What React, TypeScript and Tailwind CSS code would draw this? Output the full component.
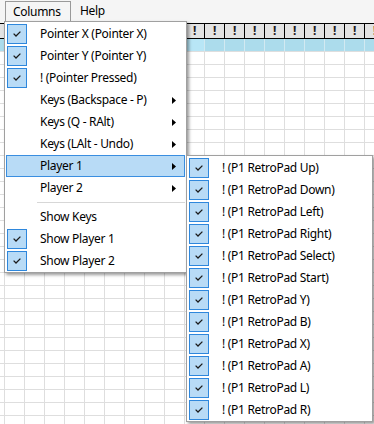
import clsx from 'clsx';

const COLS = 19;
const ROWS = 29;

const mainItems: { label: string; checked?: boolean; arrow?: boolean; active?: boolean; sep?: boolean }[] = [
    { label: 'Pointer X (Pointer X)', checked: true },
    { label: 'Pointer Y (Pointer Y)', checked: true },
    { label: '! (Pointer Pressed)', checked: true },
    { label: 'Keys (Backspace - P)', arrow: true },
    { label: 'Keys (Q - RAlt)', arrow: true },
    { label: 'Keys (LAlt - Undo)', arrow: true },
    { label: 'Player 1', arrow: true, active: true },
    { label: 'Player 2', arrow: true },
    { label: '', sep: true },
    { label: 'Show Keys' },
    { label: 'Show Player 1', checked: true },
    { label: 'Show Player 2', checked: true },
];

const padItems = ['Up', 'Down', 'Left', 'Right', 'Select', 'Start', 'Y', 'B', 'X', 'A', 'L', 'R'];

function Check() {
    return (
        <span className="flex h-[20px] w-[20px] items-center justify-center border border-[#2e87dc] bg-[#b8dbf6]">
            <svg width="8" height="6" viewBox="0 0 8 6">
                <path d="M0.6 2.6 L3 5 L7.4 0.6" stroke="#1b1b1b" strokeWidth="1.3" fill="none" />
            </svg>
        </span>
    );
}

function MenuItem({ label, checked, arrow, active }: { label: string; checked?: boolean; arrow?: boolean; active?: boolean }) {
    return (
        <div
            className={clsx(
                'mx-[1px] flex h-[22px] items-center border',
                active ? 'border-[#3a8ee0] bg-[#b8dbf6]' : 'border-transparent'
            )}
        >
            <div className="h-[20px] w-[20px]">{checked && <Check />}</div>
            <span className="ml-[13px] whitespace-nowrap">{label}</span>
            {arrow && (
                <svg className="ml-auto mr-[8px]" width="4" height="7" viewBox="0 0 4 7">
                    <path d="M0 0 L4 3.5 L0 7 Z" fill="#000" />
                </svg>
            )}
        </div>
    );
}

export default function App() {
    return (
        <div className="relative h-[424px] w-[374px] overflow-hidden bg-white font-['Noto_Sans',sans-serif] text-[12px] tracking-[-0.3px] text-black">
            {/* Menu bar */}
            <div className="flex h-[23px] items-start bg-[#f5f5f5]">
                <div className="ml-[5px] mt-[1px] flex h-[21px] w-[66px] items-center border border-b-0 border-[#9a9a9a] pl-[7px]">
                    Columns
                </div>
                <div className="ml-[9px] flex h-[22px] items-center">Help</div>
            </div>

            {/* Grid */}
            <div className="flex flex-col">
                <div className="flex h-[16px] border-y border-black bg-[#e3e3e3]">
                    <div className="w-[5px] shrink-0 border-r border-black" />
                    {Array.from({ length: COLS }).map((_, i) => (
                        <div key={i} className="flex w-[20px] shrink-0 items-center justify-center border-r border-black font-bold leading-none text-[#1a1a1a]">
                            !
                        </div>
                    ))}
                </div>
                <div className="flex h-[13px] border-b border-[#dedede] bg-[#acdcec]">
                    <div className="w-[5px] shrink-0 border-r border-[#d2e9f1]" />
                    {Array.from({ length: COLS }).map((_, i) => (
                        <div key={i} className={clsx('w-[20px] shrink-0 border-r border-[#d2e9f1]', i === 9 && 'bg-[#b8e6f6]')} />
                    ))}
                </div>
                {Array.from({ length: ROWS }).map((_, r) => (
                    <div key={r} className="flex h-[13px] border-b border-[#dedede]">
                        <div className="w-[5px] shrink-0 border-r border-[#dedede]" />
                        {Array.from({ length: COLS }).map((_, i) => (
                            <div key={i} className="w-[20px] shrink-0 border-r border-[#dedede]" />
                        ))}
                    </div>
                ))}
            </div>

            {/* Columns dropdown */}
            <div className="absolute left-[4px] top-[21px] w-[183px] border border-[#a0a0a0] bg-white pt-[1px] shadow-[2px_2px_3px_rgba(0,0,0,0.4)]">
                {mainItems.map((it, i) =>
                    it.sep ? (
                        <div key={i} className="flex h-[7px] items-center pl-[32px] pr-[1px]">
                            <div className="h-px w-full bg-[#d7d7d7]" />
                        </div>
                    ) : (
                        <MenuItem key={i} label={it.label} checked={it.checked} arrow={it.arrow} active={it.active} />
                    )
                )}
            </div>

            {/* Player 1 submenu */}
            <div className="absolute left-[186px] top-[155px] w-[187px] border border-[#a0a0a0] bg-white pt-[1px] shadow-[2px_2px_3px_rgba(0,0,0,0.4)]">
                {padItems.map(p => (
                    <MenuItem key={p} label={`! (P1 RetroPad ${p})`} checked />
                ))}
            </div>
        </div>
    );
}
